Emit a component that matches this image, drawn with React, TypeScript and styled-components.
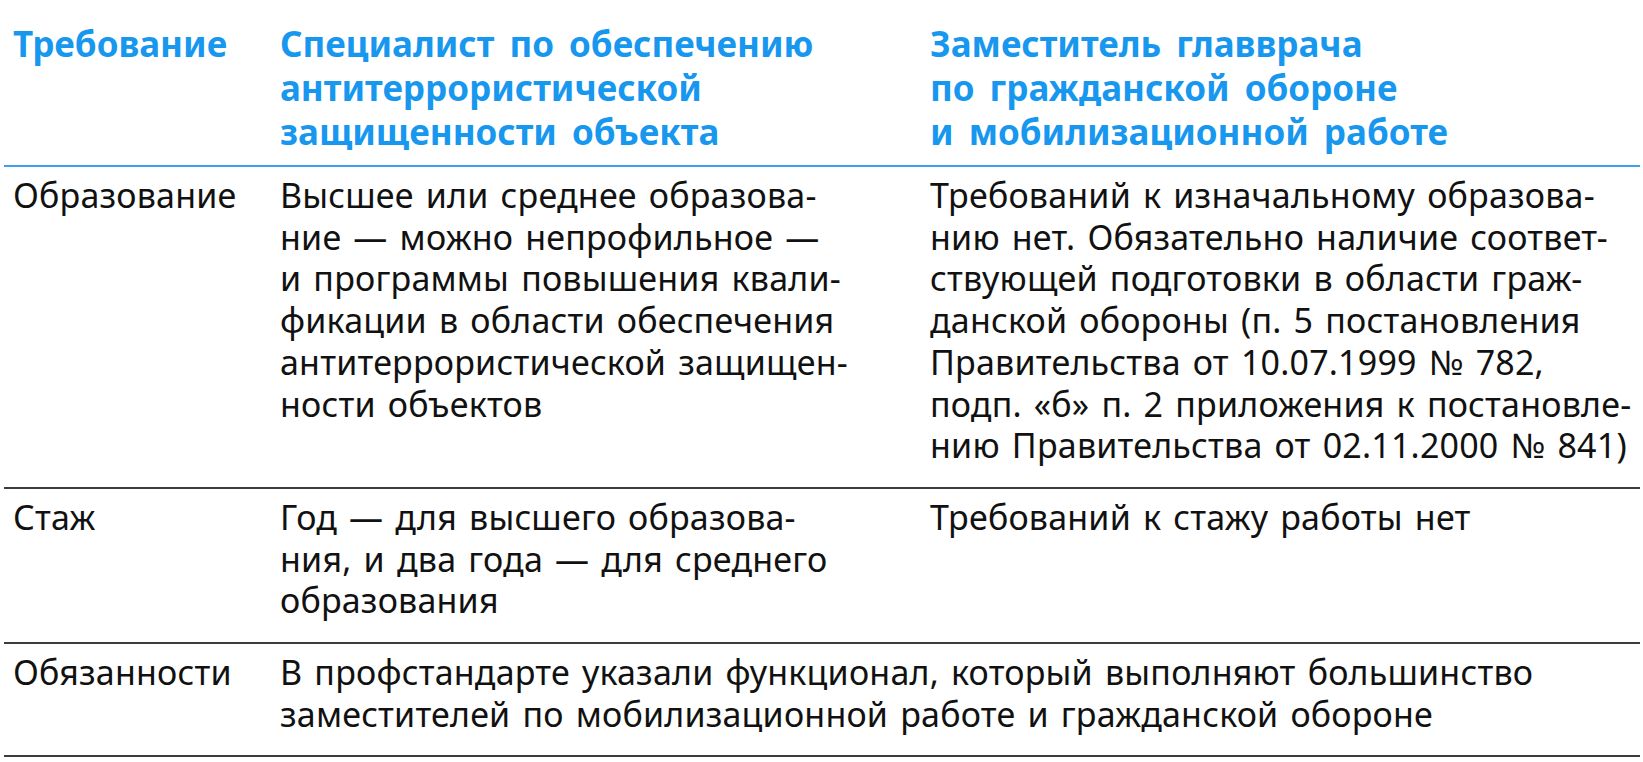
import React from 'react';
import styled, { createGlobalStyle } from 'styled-components';

const GlobalStyle = createGlobalStyle`
  html, body {
    margin: 0;
    padding: 0;
    background: #ffffff;
  }
  body {
    font-family: 'Noto Sans', 'Open Sans', sans-serif;
    color: #111111;
  }
`;

const Table = styled.div`
  display: grid;
  grid-template-columns: 267px 650px 1fr;
  margin: 0 3px 0 4px;
`;

const HeadCell = styled.div`
  padding: 22px 9px 11px;
  font-size: 35px;
  font-weight: 700;
  line-height: 44px;
  word-spacing: 6px;
  white-space: nowrap;
  color: #1897ef;
  border-bottom: 2px solid #3aa3ec;
`;

const Cell = styled.div<{ $span?: number }>`
  grid-column: span ${(p) => p.$span || 1};
  padding: 8px 9px 20px;
  font-size: 34px;
  line-height: 41.7px;
  letter-spacing: 0.2px;
  word-spacing: 3px;
  white-space: nowrap;
  color: #111111;
  border-bottom: 2px solid #3c3c3c;
`;

const rows: { label: string; cells: string[][] }[] = [
  {
    label: 'Образование',
    cells: [
      [
        'Высшее или среднее образова-',
        'ние — можно непрофильное —',
        'и программы повышения квали-',
        'фикации в области обеспечения',
        'антитеррористической защищен-',
        'ности объектов',
      ],
      [
        'Требований к изначальному образова-',
        'нию нет. Обязательно наличие соответ-',
        'ствующей подготовки в области граж-',
        'данской обороны (п. 5 постановления',
        'Правительства от 10.07.1999 № 782,',
        'подп. «б» п. 2 приложения к постановле-',
        'нию Правительства от 02.11.2000 № 841)',
      ],
    ],
  },
  {
    label: 'Стаж',
    cells: [
      ['Год — для высшего образова-', 'ния, и два года — для среднего', 'образования'],
      ['Требований к стажу работы нет'],
    ],
  },
  {
    label: 'Обязанности',
    cells: [
      [
        'В профстандарте указали функционал, который выполняют большинство',
        'заместителей по мобилизационной работе и гражданской обороне',
      ],
    ],
  },
];

const Lines = ({ lines }: { lines: string[] }) => (
  <>
    {lines.map((l, i) => (
      <React.Fragment key={i}>
        {l}
        {i < lines.length - 1 && <br />}
      </React.Fragment>
    ))}
  </>
);

const App = () => (
  <>
    <GlobalStyle />
    <Table>
      <HeadCell>Требование</HeadCell>
      <HeadCell>
        <Lines lines={['Специалист по обеспечению', 'антитеррористической', 'защищенности объекта']} />
      </HeadCell>
      <HeadCell>
        <Lines lines={['Заместитель главврача', 'по гражданской обороне', 'и мобилизационной работе']} />
      </HeadCell>
      {rows.map((r) => (
        <React.Fragment key={r.label}>
          <Cell>{r.label}</Cell>
          {r.cells.map((c, i) => (
            <Cell key={i} $span={r.cells.length === 1 ? 2 : 1}>
              <Lines lines={c} />
            </Cell>
          ))}
        </React.Fragment>
      ))}
    </Table>
  </>
);

export default App;
